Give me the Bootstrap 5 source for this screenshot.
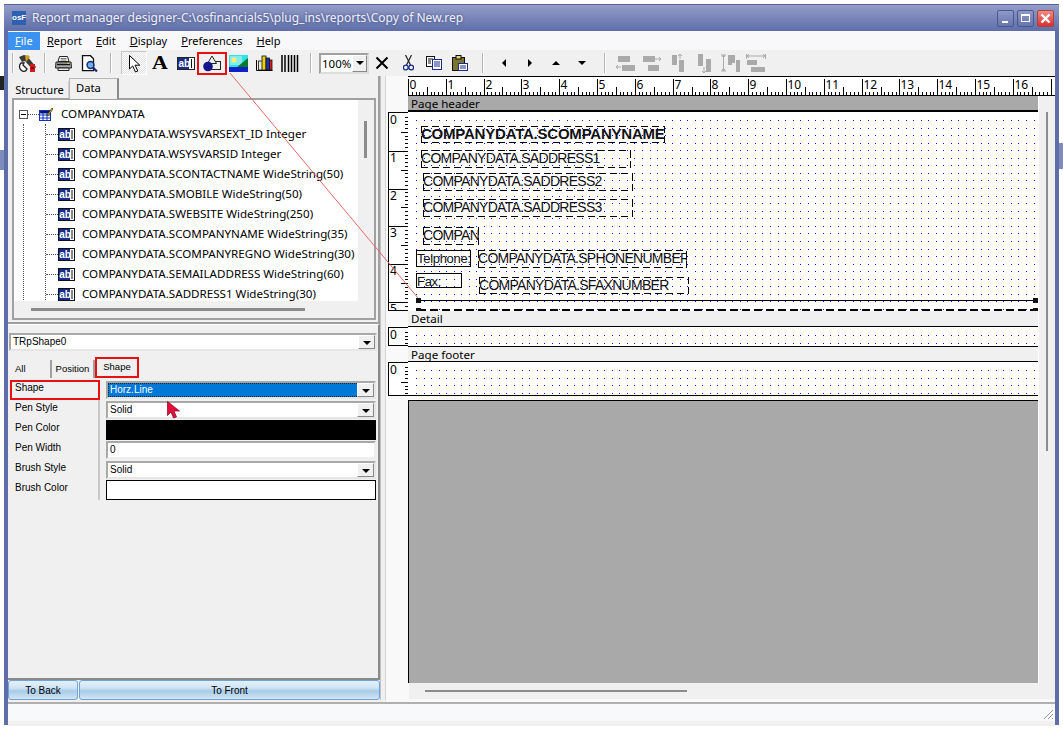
<!DOCTYPE html>
<html lang="en">
<head>
<meta charset="UTF-8">
<title>Report manager designer</title>
<link rel="stylesheet" href="https://cdn.jsdelivr.net/npm/bootstrap@5.3.3/dist/css/bootstrap.min.css">
<style>
html, body { height: 729px; overflow: hidden; background: #fff; }
body { font-family: "Noto Sans", "Liberation Sans", sans-serif; font-size: 12px; color: #000; position: relative; }
.desk-a { position: absolute; left: 0; top: 150px; width: 4px; height: 20px; background: #7f8bbd; }
.desk-b { position: absolute; left: 0; top: 76px; width: 4px; height: 14px; background: #222; }
.desk-c { position: absolute; left: 1059px; top: 143px; width: 4px; height: 26px; background: #7f8bbd; }
.win { margin: 4px 0 0 4px; width: 1055px; height: 721px; background: #5f6ea9; padding: 0 4px 4px; border-top: 1px solid #56639c; }
.titlebar { height: 26px; margin: 0 -4px; padding: 0 5px 0 8px; background: linear-gradient(#939dc8, #5f6ea9); color: #f0f2fa; font-size: 12px; text-shadow: 0 0 3px #39447a; }
.appicon { width: 14px; height: 14px; background: #2f5fb0; color: #fff; font: bold 8px/14px "Liberation Sans", sans-serif; text-align: center; margin: 0 6px 0 0; text-shadow: none; }
.wbtn { width: 17px; height: 17px; border: 1px solid #4b5890; border-radius: 2px; background: linear-gradient(#8e99c6, #6675ae); margin-left: 3px; position: relative; }
.wbtn.is-close { background: linear-gradient(#f28a85, #d9322c); border-color: #a9443f; }
.wbtn svg { position: absolute; left: 0; top: 0; }
.body-pane { background: #f0f0f0; height: 695px; }
.menubar { height: 19px; background: #f8f8fb; padding-top: 1px; font-size: 11px; }
.menu-it { line-height: 18px; height: 18px; margin-right: 14px; color: #000; }
.menu-it.is-on { background: #3b92f0; color: #fff; width: 32px; margin-right: 7px; padding-left: 7px; }
.menu-it u { text-underline-offset: 1px; }
.toolbar { height: 26px; background: #f0f0f0; padding-left: 4px; }
.tsep { width: 2px; height: 20px; background: #b5b5b5; border-right: 1px solid #fff; flex: none; }
.tbtn { width: 26px; height: 24px; flex: none; display: flex; align-items: center; justify-content: center; position: relative; }
.tbtn.is-down { background: repeating-conic-gradient(#e4e4e4 0 25%, #fff 0 50%) 0 0 / 2px 2px; border: 1px solid #c8c8c8; border-right-color: #fff; border-bottom-color: #fff; }
.tbtn.is-marked { outline: 2px solid #e81010; outline-offset: -1px; height: 21px; width: 28px; margin: 0 -1px; background: #f0f0f0; z-index: 1; }
.letter-a { font: 700 19px/20px "Liberation Serif", serif; display: inline-block; transform: scaleX(1.15); }
.zoom-combo { width: 50px; height: 21px; flex: none; background: #fff; border: 2px solid #a0a0a0; border-right-color: #ddd; border-bottom-color: #ddd; font-size: 11.5px; padding-left: 1px; line-height: 17px; position: relative; white-space: nowrap; overflow: hidden; }
.ddn { position: absolute; right: 0; top: 0; bottom: 0; width: 15px; background: #f0f0f0; border: 1px solid #fff; border-right-color: #888; border-bottom-color: #888; }
.ddn::after { content: ""; position: absolute; left: 3px; top: 5px; border: 4px solid transparent; border-top: 4px solid #000; border-bottom: 0; }
.main { height: 626px; }
.left-pane { width: 372px; flex: none; display: flex; flex-direction: column; height: 626px; }
.split { width: 6px; flex: none; background: #f0f0f0; border-left: 1px solid #c0c0c0; border-right: 1px solid #d4d4d4; height: 624px; }
.design-pane { flex: 1; min-width: 0; background: #f9f9f9; position: relative; }
.tree-box { height: 248px; padding: 0 2px 0 0; border-bottom: 2px solid #a0a0a0; border-right: 2px solid #a0a0a0; flex: none; }
.tabset { height: 22px; padding-left: 3px; align-items: flex-end; border: 0; flex-wrap: nowrap; }
.tabby { font-size: 11.2px; height: 17px; line-height: 18px; padding: 0 4px; width: 58px; text-align: center; border-right: 1px solid #d0d0d0; white-space: nowrap; }
.tabby.is-on { height: 21px; width: 50px; background: #f0f0f0; border: 1px solid #b8b8b8; border-bottom: 0; border-right: 2px solid #8a8a8a; margin-bottom: -1px; position: relative; z-index: 1; line-height: 18px; text-align: left; padding-left: 6px; }
.tree-frame { margin-left: 4px; height: 222px; border: 2px solid #a0a0a0; border-right-width: 2px; width: 364px; position: relative; background: #f0f0f0; }
.tree-view { width: 344px; height: 201px; background: #fff; overflow: hidden; padding-top: 4px; font-size: 11.6px; line-height: 20px; }
.tree-row { height: 20px; display: flex; align-items: center; white-space: nowrap; }
.tree-row svg { flex: none; }
.tree-plus { width: 9px; height: 9px; border: 1px solid #555; position: relative; margin-left: 5px; flex: none; background: #fff; }
.tree-plus::after { content: ""; position: absolute; left: 1px; right: 1px; top: 3px; height: 1px; background: #000; }
.tree-kids { margin-left: 9px; border-left: 1px dotted #555; }
.tree-kids2 { margin-left: 21px; border-left: 1px dotted #555; }
.tdash { width: 12px; border-top: 1px dotted #555; flex: none; }
.vthumb { position: absolute; width: 3px; background: #8c8c8c; }
.hthumb { position: absolute; height: 3px; background: #8c8c8c; }
.inspector { flex: 1; padding: 8px 0 0 1px; border-bottom: 2px solid #8a8a8a; border-right: 2px solid #8a8a8a; font-family: "Liberation Sans", sans-serif; font-size: 10px; border-top: 1px solid #fff; }
.cmb { position: relative; background: #fff; border: 2px solid #a8a8a8; border-right-color: #e6e6e6; border-bottom-color: #e6e6e6; height: 18px; line-height: 14px; padding-left: 2px; }
.cmb .ddn { width: 17px; }
.cmb .ddn::after { left: 4px; }
.itabs { height: 20px; margin: 7px 0 0 2px; align-items: flex-end; font-size: 9.5px; position: relative; border: 0; flex-wrap: nowrap; }
.itab { height: 18px; line-height: 18px; text-align: center; border-right: 2px solid #a0a0a0; flex: none; }
.itab.is-marked { outline: 2px solid #e81010; outline-offset: -1px; border: 0; }
.prop-grid { display: grid; grid-template-columns: 90px 1fr; margin-top: 2px; width: 366px; margin-left: 1px; }
.prop-name { height: 20px; padding: 1px 0 0 5px; border-right: 2px solid #c8c8c8; line-height: 14px; position: relative; }
.prop-name.is-marked { outline: 2px solid #e81010; outline-offset: -2px; }
.prop-val { height: 20px; margin-left: 6px; padding: 1px 0; }
.prop-val .cmb { height: 18px; }
.cmb.is-sel span { display: block; background: #0078d7; color: #fff; margin: 0 15px 0 -2px; padding-left: 2px; height: 14px; outline: 1px dotted #222; outline-offset: -1px; }
.colorbar { height: 20px; background: #000; }
.colorbar2 { height: 20px; background: #fff; border: 1px solid #000; }
.txt-in { height: 18px; background: #fff; border: 2px solid #a8a8a8; border-right-color: #eee; border-bottom-color: #eee; padding-left: 2px; line-height: 14px; }
.btn-row { height: 20px; flex: none; margin-bottom: 2px; font-family: "Liberation Sans", sans-serif; }
.btn-blue { --bs-btn-padding-y: 0; --bs-btn-padding-x: 0; --bs-btn-font-size: 10px; --bs-btn-border-radius: 3px; --bs-btn-line-height: 17px; --bs-btn-color: #000; --bs-btn-border-color: #6ea3d8; background: linear-gradient(#e3f0fa, #cfe3f4 40%, #a5cbe9 55%, #d3e6f5); font-family: "Liberation Sans", sans-serif; height: 20px; }
.ruler-top { position: absolute; left: 22px; top: 0; width: 647px; height: 21px; background: #fff; border-top: 1px solid #000; border-bottom: 2px solid #000; overflow: hidden; }
.ruler-top svg, .ruler-side svg { display: block; }
.band-title { position: absolute; left: 22px; width: 630px; border-bottom: 1px solid #000; padding-left: 3px; line-height: 15px; font-size: 11.6px; background: #f0f0f0; }
.band-title.is-grey { background: #a9a9a9; border-bottom: 2px solid #000; }
.band-canvas { position: absolute; left: 22px; width: 630px; background: #fff; overflow: hidden; }
.band-canvas svg { position: absolute; left: 0; top: 0; }
.ruler-side { position: absolute; left: 2px; width: 21px; background: #fff; border: 1px solid #000; overflow: hidden; }
.grey-bottom { position: absolute; left: 22px; top: 324px; width: 630px; height: 283px; background: #a9a9a9; border-top: 1px solid #000; border-left: 1px solid #000; }
.scroll-v { position: absolute; left: 652px; top: 20px; width: 17px; height: 587px; background: #f0f0f0; border-left: 1px solid #fff; }
.scroll-h { position: absolute; left: 23px; top: 607px; width: 646px; height: 16px; background: #f0f0f0; }
/* long dashes like the designer draws them, a css dashed border is too fine */
.rp { position: absolute; font-family: "Liberation Sans", sans-serif; font-size: 14px; letter-spacing: -.72px; line-height: 16px; white-space: nowrap; overflow: hidden; color: #111;
  background:
    repeating-linear-gradient(90deg, #000 0 7px, transparent 7px 11px) left top / 100% 1px no-repeat,
    repeating-linear-gradient(90deg, #000 0 7px, transparent 7px 11px) left bottom / 100% 1px no-repeat,
    repeating-linear-gradient(0deg, #000 0 7px, transparent 7px 10px) left top / 1px 100% no-repeat,
    repeating-linear-gradient(0deg, #000 0 7px, transparent 7px 10px) right top / 1px 100% no-repeat; }
.rp.is-bold { font-weight: 700; font-size: 15px; letter-spacing: -.22px; line-height: 15px; }
.rp.is-solid { background: none; border: 1px solid #000; font-size: 13px; letter-spacing: -.3px; line-height: 15px; }
.rp-line { position: absolute; left: 10px; top: 188px; width: 619px; height: 11px; border-top: 1px solid #000;
  background: repeating-linear-gradient(90deg, #000 0 8px, transparent 8px 12px) left bottom / 100% 2px no-repeat; }
.hnd { position: absolute; width: 5px; height: 5px; background: #111; }
.statusbar { height: 19px; background: #f8f9fb; border-top: 2px solid #b0b0b0; position: relative; }
.grip { position: absolute; right: 1px; bottom: 1px; }
.overlay { position: absolute; left: 0; top: 0; pointer-events: none; z-index: 5; }
</style>
</head>
<body>
<div class="desk-a"></div><div class="desk-b"></div><div class="desk-c"></div>
<div class="win">
  <div class="titlebar d-flex align-items-center">
    <div class="appicon">osF</div>
    <div class="flex-grow-1">Report manager designer-C:\osfinancials5\plug_ins\reports\Copy of New.rep</div>
    <div class="wbtn"><svg width="15" height="15"><rect x="4" y="10" width="6" height="2" fill="#fff"/></svg></div>
    <div class="wbtn"><svg width="15" height="15"><rect x="3.5" y="3.5" width="8" height="7" fill="none" stroke="#fff"/><rect x="3" y="3" width="9" height="2" fill="#fff"/></svg></div>
    <div class="wbtn is-close"><svg width="15" height="15"><path d="M3.5 3.5l8 8M11.5 3.5l-8 8" stroke="#fff" stroke-width="2.4"/></svg></div>
  </div>
  <div class="body-pane">
    <div class="menubar d-flex">
      <div class="menu-it is-on"><u>F</u>ile</div>
      <div class="menu-it"><u>R</u>eport</div>
      <div class="menu-it"><u>E</u>dit</div>
      <div class="menu-it"><u>D</u>isplay</div>
      <div class="menu-it"><u>P</u>references</div>
      <div class="menu-it"><u>H</u>elp</div>
    </div>
    <div class="toolbar d-flex align-items-center">
      <div class="tsep"></div>
      <div class="tbtn"><svg width="19" height="19" viewBox="0 0 19 19"><path d="M1 3l5-2 3 1 9 11-3 3-8-9-3 1z" fill="#3a3a3a"/><path d="M7 2l3-1 2 2-4 5z" fill="#c9a020"/><path d="M3 9c-2 2-2 5 0 7s5 2 6-1L5 11l1-2z" fill="#fff" stroke="#222" stroke-width="1.300"/><rect x="12" y="10" width="5" height="8" fill="#d81818"/><path d="M13 14h3" stroke="#111"/></svg></div>
      <div class="tsep ms-1"></div>
      <div class="tbtn ms-1"><svg width="17" height="15" viewBox="0 0 17 15"><path d="M4.500 .5h8l1.500 5h-11z" fill="#fff" stroke="#222"/><path d="M5.500 2.500h6M5.500 4h6" stroke="#777"/><path d="M1 6h15l.5 6H.5z" fill="#aaa" stroke="#222"/><path d="M2 8.500h13" stroke="#111" stroke-width="1.400"/><path d="M3 12h11v2.500H3z" fill="#e8e8e8" stroke="#222"/><rect x="12" y="7" width="2" height="1" fill="#e8d010"/></svg></div>
      <div class="tbtn"><svg width="17" height="17" viewBox="0 0 17 17"><path d="M1.500 .7h8l3 3v12h-11z" fill="#fff" stroke="#111" stroke-width="1.300"/><circle cx="9.500" cy="10" r="3.400" fill="#6db3e8" stroke="#1a2b78" stroke-width="1.500"/><path d="M12 12.500l4 4" stroke="#1a2b78" stroke-width="2.200"/></svg></div>
      <div class="tsep" style="margin-left:8px;margin-right:9px"></div>
      <div class="tbtn is-down"><svg width="15" height="19" viewBox="0 0 15 19"><path d="M2.500 1.500v13.500l3.200-3 2.800 6 2.300-1-2.700-5.800h4.700z" fill="#fff" stroke="#000"/></svg></div>
      <div class="tbtn"><span class="letter-a">A</span></div>
      <div class="tbtn"><svg width="18" height="13" viewBox="0 0 18 13"><rect x=".5" y=".5" width="17" height="12" fill="#fff" stroke="#222"/><rect x="1" y="1" width="11" height="11" fill="#1a2b8a"/><text x="1.500" y="10" font-family="Liberation Sans" font-weight="700" font-size="10" fill="#fff">ab</text><path d="M14.500 2v9" stroke="#111"/></svg></div>
      <div class="tbtn is-marked"><svg width="20" height="17" viewBox="0 0 20 17"><rect x="9.500" y="6.500" width="9" height="8" fill="#f0f0f0" stroke="#222"/><path d="M10 1l4.500 7.500h-9z" fill="#f0f0f0" stroke="#222"/><circle cx="6" cy="11.500" r="4.800" fill="#14148c"/></svg></div>
      <div class="tbtn"><svg width="19" height="17" viewBox="0 0 19 17"><rect width="19" height="12" fill="#2fe0e8"/><path d="M1 1h12v9H1z" fill="#aaf0e8" opacity=".7"/><path d="M8 12L19 3v9z" fill="#0a7a30"/><path d="M0 12h19v5H0z" fill="#1020c8"/><circle cx="5" cy="5" r="2.500" fill="#ffef70"/></svg></div>
      <div class="tbtn"><svg width="17" height="16" viewBox="0 0 17 16"><path d="M.5 5v10.500h16" stroke="#000" fill="none"/><rect x="2.500" y="6" width="4" height="9" fill="#e8e8d0" stroke="#111" stroke-width=".8"/><rect x="6" y="1" width="4" height="14" fill="#e8d010" stroke="#111" stroke-width=".8"/><rect x="10" y="3" width="3.500" height="12" fill="#2030b0" stroke="#111" stroke-width=".8"/><rect x="13.500" y="5" width="2.500" height="10" fill="#d82020" stroke="#111" stroke-width=".8"/></svg></div>
      <div class="tbtn"><svg width="18" height="17" viewBox="0 0 18 17"><path d="M1 0v17M4 0v17M7.500 0v17M10.500 0v17M13.500 0v17M16.500 0v17" stroke="#000" stroke-width="1.500"/></svg></div>
      <div class="tsep" style="margin-left:7px;margin-right:7px"></div>
      <div class="zoom-combo">100%<div class="ddn"></div></div>
      <div class="tbtn"><svg width="14" height="14" viewBox="0 0 14 14"><path d="M1.500 1.500l11 11M12.500 1.500l-11 11" stroke="#000" stroke-width="2"/></svg></div>
      <div class="tbtn"><svg width="11" height="16" viewBox="0 0 11 16"><path d="M2.500 0l5 10M8.500 0l-5 10" stroke="#222" stroke-width="1.200"/><circle cx="2.800" cy="12.500" r="2.400" fill="none" stroke="#1a2b8a" stroke-width="1.300"/><circle cx="8.200" cy="12.500" r="2.400" fill="none" stroke="#1a2b8a" stroke-width="1.300"/></svg></div>
      <div class="tbtn"><svg width="16" height="14" viewBox="0 0 16 14"><rect x=".5" y=".5" width="8" height="10" fill="#fff" stroke="#111"/><path d="M2 3h5M2 5h3M2 7h3" stroke="#111"/><rect x="6.500" y="3.500" width="9" height="10" fill="#fff" stroke="#1a2b8a"/><path d="M8 6h6M8 8h6M8 10h6" stroke="#1a2b8a"/></svg></div>
      <div class="tbtn"><svg width="16" height="16" viewBox="0 0 16 16"><rect x=".5" y="2.500" width="12" height="13" fill="#7c7433" stroke="#111"/><rect x="4" y=".5" width="5" height="3.500" fill="#e4d67c" stroke="#111"/><rect x="6.500" y="8.500" width="9" height="7" fill="#fff" stroke="#1a2b8a"/><path d="M8 11h6M8 13h6" stroke="#1a2b8a"/></svg></div>
      <div class="tsep" style="margin-left:9px;margin-right:7px"></div>
      <div class="tbtn"><svg width="8" height="10"><path d="M6 1v8L2 5z" fill="#000"/></svg></div>
      <div class="tbtn"><svg width="8" height="10"><path d="M2 1v8l4-4z" fill="#000"/></svg></div>
      <div class="tbtn"><svg width="10" height="8"><path d="M1 6h8L5 2z" fill="#000"/></svg></div>
      <div class="tbtn"><svg width="10" height="8"><path d="M1 2h8L5 6z" fill="#000"/></svg></div>
      <div class="tsep" style="margin-left:9px;margin-right:7px"></div>
      <div class="tbtn"><svg width="20" height="17" fill="#aaa"><rect x="2" y="1" width="12" height="6"/><rect x="6" y="10" width="13" height="6"/><path d="M0 12h5M0 12l2-2M0 12l2 2" stroke="#aaa" fill="none"/></svg></div>
      <div class="tbtn"><svg width="20" height="17" fill="#aaa"><rect x="1" y="1" width="12" height="6"/><rect x="6" y="10" width="11" height="6"/><path d="M13 4h6M19 4l-2-2M19 4l-2 2" stroke="#aaa" fill="none"/></svg></div>
      <div class="tbtn"><svg width="15" height="18" fill="#aaa"><rect x="1" y="1" width="5" height="10"/><rect x="8" y="6" width="5" height="12"/><path d="M9 0v5M9 0l-2 2M9 0l2 2" stroke="#aaa" fill="none"/></svg></div>
      <div class="tbtn"><svg width="15" height="19" fill="#aaa"><rect x="1" y="0" width="5" height="12"/><rect x="9" y="5" width="5" height="13"/><path d="M7 13v6M7 19l-2-2M7 19l2-2" stroke="#aaa" fill="none"/></svg></div>
      <div class="tbtn"><svg width="19" height="18" fill="#aaa"><path d="M2.500 1v16M0 1h5M0 17h5M1 3l1.500-2 1.500 2M1 15l1.500 2 1.500-2" stroke="#aaa" fill="none"/><rect x="7" y="1" width="4" height="10"/><rect x="11" y="1" width="3" height="8"/><rect x="15" y="6" width="4" height="12"/></svg></div>
      <div class="tbtn"><svg width="20" height="18" fill="#aaa"><path d="M1 2h18M3 0L1 2l2 2M17 0l2 2-2 2M.5 0v5M19.500 0v5" stroke="#aaa" fill="none"/><rect x="1" y="6" width="10" height="5"/><rect x="5" y="13" width="14" height="5"/></svg></div>
    </div>
    <div class="main d-flex">
      <div class="left-pane">
        <div class="tree-box">
          <div class="nav tabset d-flex">
            <div class="tabby">Structure</div>
            <div class="tabby is-on">Data</div>
          </div>
          <div class="tree-frame">
            <div class="tree-view" id="tree"></div>
            <div class="vthumb" style="left:350px;top:21px;height:37px"></div>
            <div class="hthumb" style="left:17px;top:208px;width:274px"></div>
          </div>
        </div>
        <div class="inspector">
          <div class="cmb" style="width:368px">TRpShape0<div class="ddn"></div></div>
          <div class="nav itabs">
            <div class="itab ps-1 text-start" style="width:41px">All</div>
            <div class="itab" style="width:43px">Position</div>
            <div class="itab is-marked" style="width:42px;margin-left:1px;height:19px;margin-bottom:1px">Shape</div>
          </div>
          <div class="prop-grid">
            <div class="prop-name is-marked">Shape</div>
            <div class="prop-val"><div class="cmb is-sel"><span>Horz.Line</span><div class="ddn"></div></div></div>
            <div class="prop-name">Pen Style</div>
            <div class="prop-val"><div class="cmb">Solid<div class="ddn"></div></div></div>
            <div class="prop-name">Pen Color</div>
            <div class="prop-val p-0"><div class="colorbar"></div></div>
            <div class="prop-name">Pen Width</div>
            <div class="prop-val"><div class="txt-in">0</div></div>
            <div class="prop-name">Brush Style</div>
            <div class="prop-val"><div class="cmb">Solid<div class="ddn"></div></div></div>
            <div class="prop-name">Brush Color</div>
            <div class="prop-val p-0"><div class="colorbar2"></div></div>
          </div>
        </div>
        <div class="btn-row d-flex gap-0">
          <button class="btn btn-blue" style="width:70px;margin-right:1px">To Back</button>
          <button class="btn btn-blue flex-grow-1">To Front</button>
        </div>
      </div>
      <div class="split"></div>
      <div class="design-pane">
        <div class="ruler-top"><svg id="rulerTop" width="647" height="18"></svg></div>
        <div class="band-title is-grey" style="top:20px;height:16px">Page header</div>
        <div class="ruler-side" style="top:36px;height:199px"><svg class="side-svg" width="19" height="197"></svg></div>
        <div class="band-canvas" style="top:36px;height:199px" id="bandHeader">
          <svg class="dots" width="630" height="199"></svg>
          <div class="rp is-bold" style="left:13px;top:14px;width:244px;height:17px;">COMPANYDATA.SCOMPANYNAME</div>
          <div class="rp" style="left:13px;top:38px;width:210px;height:18px">COMPANYDATA.SADDRESS1</div>
          <div class="rp" style="left:15px;top:61px;width:210px;height:18px">COMPANYDATA.SADDRESS2</div>
          <div class="rp" style="left:15px;top:87px;width:210px;height:18px">COMPANYDATA.SADDRESS3</div>
          <div class="rp" style="left:15px;top:115px;width:56px;height:18px">COMPAN</div>
          <div class="rp is-solid" style="left:8px;top:138px;width:55px;height:17px">Telphone:</div>
          <div class="rp" style="left:70px;top:138px;width:209px;height:18px">COMPANYDATA.SPHONENUMBER</div>
          <div class="rp is-solid" style="left:8px;top:161px;width:46px;height:15px">Fax:</div>
          <div class="rp" style="left:71px;top:165px;width:210px;height:17px">COMPANYDATA.SFAXNUMBER</div>
          <div class="rp-line"></div>
          <div class="hnd" style="left:8px;top:186px"></div>
          <div class="hnd" style="left:625px;top:186px"></div>
          <div class="hnd" style="left:625px;top:196px"></div>
          <div class="hnd" style="left:8px;top:196px"></div>
        </div>
        <div class="band-title" style="top:235px;height:16px">Detail</div>
        <div class="ruler-side" style="top:251px;height:19px"><svg class="side-svg" width="19" height="17"></svg></div>
        <div class="band-canvas" style="top:251px;height:19px"><svg class="dots" width="630" height="19"></svg></div>
        <div class="band-title" style="top:270px;height:16px;border-top:1px solid #000">Page footer</div>
        <div class="ruler-side" style="top:286px;height:34px"><svg class="side-svg" width="19" height="32"></svg></div>
        <div class="band-canvas" style="top:286px;height:34px;border-bottom:1px solid #000"><svg class="dots" width="630" height="34"></svg></div>
        <div class="grey-bottom"></div>
        <div class="scroll-v"><div class="vthumb" style="left:7px;top:16px;height:339px;width:2px"></div></div>
        <div class="scroll-h"><div class="hthumb" style="left:16px;top:7px;width:262px;height:2px"></div></div>
      </div>
    </div>
    <div class="statusbar"><svg class="grip" width="12" height="12"><path d="M11 2L2 11M11 6l-5 5M11 10l-1 1" stroke="#999"/></svg></div>
  </div>
</div>
<svg class="overlay" width="1063" height="729">
  <path d="M230 73L418 298" stroke="#e26a6a" stroke-width="1"/>
  <path d="M167.500 401.500v14l3.500-3.500 2.500 6 3-1-2.500-6h5.500z" fill="#e0103a" stroke="#8a0020" stroke-width=".7"/>
</svg>
<script>
  var NS = 'http://www.w3.org/2000/svg', CM = 37.8;

  function add(svg, tag, attrs, text) {
    var el = document.createElementNS(NS, tag);
    for (var k in attrs) el.setAttribute(k, attrs[k]);
    if (text !== undefined) el.textContent = text;
    svg.appendChild(el);
  }

  // tree rows
  var fields = ['WSYSVARSEXT_ID Integer', 'WSYSVARSID Integer', 'SCONTACTNAME WideString(50)', 'SMOBILE WideString(50)',
    'SWEBSITE WideString(250)', 'SCOMPANYNAME WideString(35)', 'SCOMPANYREGNO WideString(30)', 'SEMAILADDRESS WideString(60)', 'SADDRESS1 WideString(30)'];
  var abIcon = '<svg width="17" height="13" viewBox="0 0 17 13"><rect x=".5" y=".5" width="16" height="12" fill="#fff" stroke="#111"/><rect x="1" y="1" width="11" height="11" fill="#1a2b8a"/><text x="1.300" y="10" font-family="Liberation Sans" font-weight="700" font-size="10" fill="#fff">ab</text><path d="M14 2v9" stroke="#111"/></svg>';
  var rows = fields.map(function (f) {
    return '<div class="tree-row"><span class="tdash"></span>' + abIcon + '<span style="margin-left:7px">COMPANYDATA.' + f + '</span></div>';
  }).join('');
  document.getElementById('tree').innerHTML =
    '<div class="tree-row"><span class="tree-plus"></span><span class="tdash" style="width:11px"></span>' +
    '<svg width="14" height="14" viewBox="0 0 14 14"><rect x=".5" y="3.500" width="11" height="10" fill="#fff" stroke="#1030c0"/><path d="M1 4h10v2H1zM1 8h10M1 11h10M4 6v7M8 6v7" stroke="#1030c0"/><path d="M8 8l5-7 1 1-5 7z" fill="#e8c020" stroke="#111" stroke-width=".6"/></svg>' +
    '<span style="margin-left:8px">COMPANYDATA</span></div>' +
    '<div class="tree-kids"><div class="tree-kids2">' + rows + '</div></div>';

  // top ruler
  var rt = document.getElementById('rulerTop');
  for (var i = 0; i <= 170; i++) {
    var x = Math.round(i * CM / 10) + 0.5, h = i % 10 === 0 ? 16 : i % 5 === 0 ? 8 : 3;
    add(rt, 'path', { d: 'M' + x + ' ' + (17 - h + 1) + 'V18', stroke: '#000' });
    if (i % 10 === 0 && i < 170) add(rt, 'text', { x: x + 1, y: 12, 'font-size': 12, 'font-family': 'Noto Sans' }, i / 10);
  }

  // side rulers
  document.querySelectorAll('.side-svg').forEach(function (svg) {
    var hgt = +svg.getAttribute('height');
    for (var j = 0; j * CM / 10 <= hgt; j++) {
      var y = Math.round(j * CM / 10) + 0.5, w = j % 10 === 0 ? 19 : j % 5 === 0 ? 7 : 3;
      if (j > 0) add(svg, 'path', { d: 'M' + (19 - w) + ' ' + y + 'H19', stroke: '#000' });
      if (j % 10 === 0) add(svg, 'text', { x: 1, y: y + 10, 'font-size': 12, 'font-family': 'Noto Sans' }, j / 10);
    }
  });

  // grid dots on the bands
  document.querySelectorAll('.dots').forEach(function (svg) {
    var w = +svg.getAttribute('width'), h = +svg.getAttribute('height'), d = '';
    for (var yy = 8; yy < h; yy += 7.56) {
      for (var xx = 8.100; xx < w; xx += 7.53) {
        d += 'M' + Math.round(xx) + ' ' + Math.round(yy) + 'h1v1h-1z';
      }
    }
    add(svg, 'path', { d: d, fill: '#0000ff' });
  });
</script>
<script src="https://cdn.jsdelivr.net/npm/bootstrap@5.3.3/dist/js/bootstrap.bundle.min.js"></script>
</body>
</html>
